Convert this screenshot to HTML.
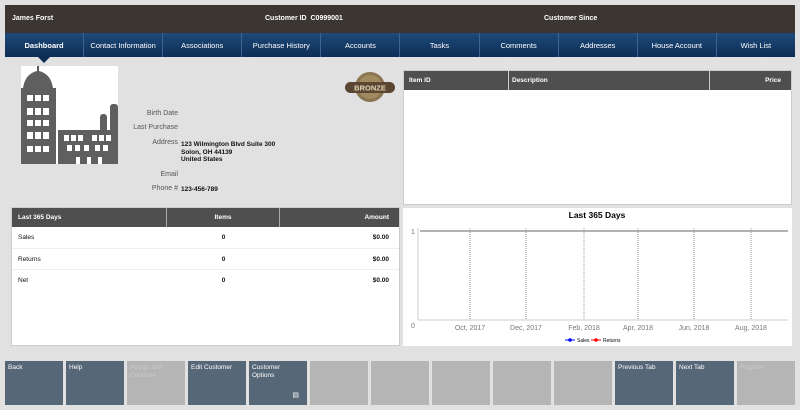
<!DOCTYPE html>
<html><head><style>
*{margin:0;padding:0;box-sizing:border-box}
body{width:800px;height:410px;background:#e1e1e1;font-family:"Liberation Sans",sans-serif;font-size:7px;position:relative;overflow:hidden;color:#111}
.a{position:absolute}
.hdr{left:5px;top:5px;width:790px;height:28px;background:#3b3631;color:#fff;font-weight:bold;font-size:7px}
.nav{left:5px;top:33px;width:790px;height:24px;background:linear-gradient(#1f4a7a,#0d2d55);display:flex}
.nav div{flex:1;color:#fff;text-align:center;line-height:26px;font-size:7.5px;border-left:1px solid #3a6594}
.nav div:first-child{border-left:none;font-weight:bold}
.th{background:#4f4f4f;color:#fff;font-weight:bold;font-size:6.5px;height:19px;line-height:19px}
.btn{position:absolute;top:361px;width:58px;height:44px;background:#566777;color:#fff;font-size:6.5px;padding:3px;line-height:8px}
.dis{background:#b5b5b5;color:#c9c9c9}
.lbl{position:absolute;right:622px;color:#555;font-size:7px;text-align:right}
.val{position:absolute;left:181px;font-weight:bold;font-size:6.5px;line-height:7.5px}
</style></head><body>
<div class="a hdr"><span class="a" style="left:7px;top:10px">James Forst</span><span class="a" style="left:260px;top:10px">Customer ID&nbsp; C0999001</span><span class="a" style="left:539px;top:10px">Customer Since</span></div>
<div class="a nav"><div>Dashboard</div><div>Contact Information</div><div>Associations</div><div>Purchase History</div><div>Accounts</div><div>Tasks</div><div>Comments</div><div>Addresses</div><div>House Account</div><div>Wish List</div></div>
<div class="a" style="left:38px;top:57px;width:0;height:0;border-left:6px solid transparent;border-right:6px solid transparent;border-top:6px solid #0d2d55"></div>
<svg class="a" style="left:21px;top:66px" width="97" height="98" viewBox="0 0 97 98">
<rect width="97" height="98" fill="#fff"/>
<g fill="#5f5f5f">
<rect x="0" y="22" width="35" height="76"/>
<path d="M2 22 Q4 8 16 5 L16 0 L18 0 L18 5 Q30 8 32 22Z"/>
<rect x="37" y="64" width="60" height="34"/>
<rect x="79" y="48" width="7" height="18" rx="3"/>
<rect x="89" y="38" width="8" height="28" rx="3"/>
</g>
<g fill="#fff">
<rect x="6" y="29" width="6" height="6"/><rect x="14" y="29" width="6" height="6"/><rect x="22" y="29" width="6" height="6"/>
<rect x="6" y="42" width="6" height="7"/><rect x="14" y="42" width="6" height="7"/><rect x="22" y="42" width="6" height="7"/>
<rect x="6" y="54" width="6" height="6"/><rect x="14" y="54" width="6" height="6"/><rect x="22" y="54" width="6" height="6"/>
<rect x="6" y="66" width="6" height="7"/><rect x="14" y="66" width="6" height="7"/><rect x="22" y="66" width="6" height="7"/>
<rect x="6" y="80" width="6" height="6"/><rect x="14" y="80" width="6" height="6"/><rect x="22" y="80" width="6" height="6"/>
<rect x="43" y="69" width="5" height="6"/><rect x="50" y="69" width="5" height="6"/><rect x="57" y="69" width="5" height="6"/>
<rect x="71" y="69" width="5" height="6"/><rect x="78" y="69" width="5" height="6"/><rect x="85" y="69" width="5" height="6"/>
<rect x="46" y="79" width="5" height="6"/><rect x="54" y="79" width="5" height="6"/><rect x="63" y="79" width="5" height="6"/><rect x="74" y="79" width="5" height="6"/><rect x="82" y="79" width="5" height="6"/>
<rect x="55" y="91" width="4" height="7"/><rect x="66" y="91" width="4" height="7"/><rect x="77" y="91" width="4" height="7"/>
</g></svg>
<div class="lbl" style="top:110px">Birth Date</div>
<div class="lbl" style="top:124px">Last Purchase</div>
<div class="lbl" style="top:139px">Address</div>
<div class="lbl" style="top:171px">Email</div>
<div class="lbl" style="top:185px">Phone #</div>
<div class="val" style="top:141px">123 Wilmington Blvd Suite 300<br>Solon, OH 44139<br>United States</div>
<div class="val" style="top:186px">123-456-789</div>
<svg class="a" style="left:344px;top:71px" width="52" height="32"><circle cx="26" cy="16" r="15" fill="#8a7550"/><circle cx="26" cy="16" r="12" fill="#a08a60"/><rect x="1" y="11" width="50" height="11" rx="5.5" fill="#5a4632"/><text x="26" y="19.5" font-size="7.5" font-weight="bold" fill="#e6d8b8" text-anchor="middle" font-family="Liberation Sans">BRONZE</text></svg>
<div class="a" style="left:403px;top:70px;width:389px;height:135px;background:#fff;border:1px solid #ccc">
<div class="th" style="display:flex"><span style="width:105px;padding-left:5px;border-right:1px solid #ccc">Item ID</span><span style="width:201px;padding-left:3px;border-right:1px solid #ccc">Description</span><span style="flex:1;text-align:right;padding-right:10px">Price</span></div></div>
<div class="a" style="left:11px;top:207px;width:389px;height:139px;background:#fff;border:1px solid #ccc">
<div class="th" style="display:flex"><span style="width:155px;padding-left:6px;border-right:1px solid #aaa">Last 365 Days</span><span style="width:113px;text-align:center;border-right:1px solid #aaa">Items</span><span style="flex:1;text-align:right;padding-right:10px">Amount</span></div>
<div style="display:flex;height:22px;line-height:22px;border-bottom:1px solid #eee;font-size:6.5px"><span style="width:155px;padding-left:6px">Sales</span><span style="width:113px;text-align:center;font-weight:bold">0</span><span style="flex:1;text-align:right;padding-right:10px;font-weight:bold">$0.00</span></div>
<div style="display:flex;height:21px;line-height:21px;border-bottom:1px solid #eee;font-size:6.5px"><span style="width:155px;padding-left:6px">Returns</span><span style="width:113px;text-align:center;font-weight:bold">0</span><span style="flex:1;text-align:right;padding-right:10px;font-weight:bold">$0.00</span></div>
<div style="display:flex;height:21px;line-height:21px;font-size:6.5px"><span style="width:155px;padding-left:6px">Net</span><span style="width:113px;text-align:center;font-weight:bold">0</span><span style="flex:1;text-align:right;padding-right:10px;font-weight:bold">$0.00</span></div>
</div>
<svg class="a" style="left:403px;top:208px" width="389" height="138">
<rect width="389" height="138" fill="#fff"/>
<text x="194" y="10" font-size="8.5" font-weight="bold" text-anchor="middle" font-family="Liberation Sans">Last 365 Days</text>
<line x1="15" y1="20" x2="15" y2="112" stroke="#ccc"/>
<line x1="15" y1="112" x2="385" y2="112" stroke="#ccc"/>
<g stroke="#999" stroke-dasharray="1,1"><line x1="67" y1="20" x2="67" y2="112"/><line x1="123" y1="20" x2="123" y2="112"/><line x1="181" y1="20" x2="181" y2="112"/><line x1="235" y1="20" x2="235" y2="112"/><line x1="291" y1="20" x2="291" y2="112"/><line x1="348" y1="20" x2="348" y2="112"/></g>
<line x1="17" y1="23" x2="385" y2="23" stroke="#666"/>
<g font-size="7" fill="#777" font-family="Liberation Sans" text-anchor="middle"><text x="10" y="26">1</text><text x="10" y="120">0</text>
<text x="67" y="122">Oct, 2017</text><text x="123" y="122">Dec, 2017</text><text x="181" y="122">Feb, 2018</text><text x="235" y="122">Apr, 2018</text><text x="291" y="122">Jun, 2018</text><text x="348" y="122">Aug, 2018</text></g>
<line x1="162" y1="132" x2="172" y2="132" stroke="#00f"/><circle cx="167" cy="132" r="1.8" fill="#00f"/>
<text x="174" y="134" font-size="5" font-family="Liberation Sans">Sales</text>
<line x1="188" y1="132" x2="198" y2="132" stroke="#f00"/><circle cx="193" cy="132" r="1.8" fill="#f00"/>
<text x="200" y="134" font-size="5" font-family="Liberation Sans">Returns</text>
</svg>
<div class="btn" style="left:5px">Back</div>
<div class="btn" style="left:66px">Help</div>
<div class="btn dis" style="left:127px">Assign and Continue</div>
<div class="btn" style="left:188px">Edit Customer</div>
<div class="btn" style="left:249px">Customer Options<span class="a" style="right:8px;bottom:5px;font-size:7px">&#9636;</span></div>
<div class="btn dis" style="left:310px"></div>
<div class="btn dis" style="left:371px"></div>
<div class="btn dis" style="left:432px"></div>
<div class="btn dis" style="left:493px"></div>
<div class="btn dis" style="left:554px"></div>
<div class="btn" style="left:615px">Previous Tab</div>
<div class="btn" style="left:676px">Next Tab</div>
<div class="btn dis" style="left:737px">Register</div>
</body></html>
